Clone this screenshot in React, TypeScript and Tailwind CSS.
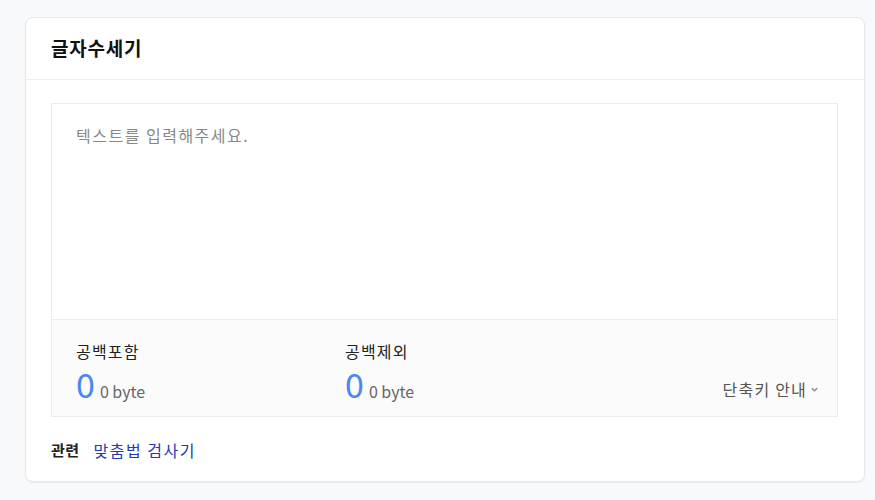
import React, { useState } from "react";

const font = { fontFamily: '"Noto Sans CJK KR", "Noto Sans", sans-serif' };

export default function App() {
  const [text, setText] = useState("");
  const withSpace = text.length;
  const noSpace = text.replace(/\s/g, "").length;
  const bytes = new TextEncoder().encode(text).length;
  const bytesNo = new TextEncoder().encode(text.replace(/\s/g, "")).length;
  return (
    <div className="min-h-[500px] bg-[#f8f9fb] pt-[17px] pl-[25px]" style={font}>
      <div className="w-[840px] rounded-lg border border-[#e6e8eb] bg-white shadow-[0_1px_2px_rgba(0,0,0,0.06)]">
        <div className="flex h-[62px] items-center border-b border-[#eeeff1] px-[25px]">
          <h1 className="text-[19px] font-bold tracking-[0.8px] text-[#111]">글자수세기</h1>
        </div>
        <div className="pl-[25px] pr-[26px] pt-[23px] pb-[19px]">
          <div className="border border-[#ececec]">
            <textarea
              value={text}
              onChange={(e) => setText(e.target.value)}
              placeholder="텍스트를 입력해주세요."
              className="block h-[215px] w-full resize-none px-[24px] pt-[19px] text-[16px] tracking-[1.5px] text-[#333] outline-none placeholder:text-[#888]"
              style={font}
            />
            <div className="flex h-[97px] items-end border-t border-[#ececec] bg-[#fbfbfb] pl-[24px] pr-[18px] pb-[13px]">
              <div className="w-[269px]">
                <div className="text-[16px] leading-[24px] tracking-[1.2px] text-[#222]">공백포함</div>
                <div className="mt-[3px] flex items-baseline gap-[5px]">
                  <span className="text-[34px] leading-[36px] text-[#4a87f5]">{withSpace}</span>
                  <span className="text-[16px] text-[#666]">{bytes} byte</span>
                </div>
              </div>
              <div className="w-[269px]">
                <div className="text-[16px] leading-[24px] tracking-[1.2px] text-[#222]">공백제외</div>
                <div className="mt-[3px] flex items-baseline gap-[5px]">
                  <span className="text-[34px] leading-[36px] text-[#4a87f5]">{noSpace}</span>
                  <span className="text-[16px] text-[#666]">{bytesNo} byte</span>
                </div>
              </div>
              <div className="ml-auto flex items-center gap-[3px] pb-[2px] text-[16px] tracking-[1.2px] text-[#555]">
                <span>단축키 안내</span>
                <svg width="9" height="9" viewBox="0 0 10 10" className="mt-[1px]">
                  <path d="M2 3.5 L5 6.5 L8 3.5" fill="none" stroke="#888" strokeWidth="1.5" />
                </svg>
              </div>
            </div>
          </div>
          <div className="mt-[21px] flex items-center gap-[14px] text-[15px]">
            <span className="font-bold tracking-[0.5px] text-[#222]">관련</span>
            <a href="#" className="text-[16px] tracking-[1.5px] text-[#2539b8]">맞춤법 검사기</a>
          </div>
        </div>
      </div>
    </div>
  );
}
